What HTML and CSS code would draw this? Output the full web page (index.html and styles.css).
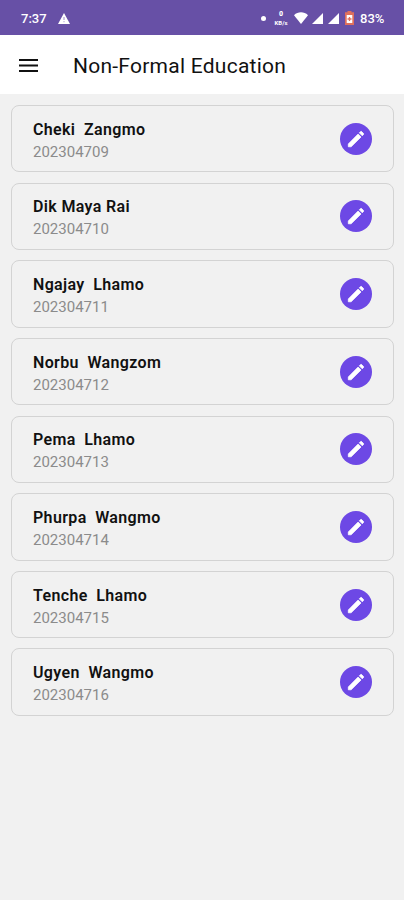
FILE: index.html
```
<!DOCTYPE html>
<html lang="en">
<head>
<meta charset="utf-8">
<title>Non-Formal Education</title>
<link rel="stylesheet" href="styles.css">
</head>
<body>
<svg class="defs" aria-hidden="true">
  <symbol id="pencil" viewBox="0 0 24 24"><path fill="#fff" stroke="#fff" stroke-width=".8" stroke-linejoin="round" d="M3.6 17.4V20.5H6.7L17.5 9.8l-3.2-3.2zM20.2 7.1a.8.8 0 0 0 0-1.1l-2.1-2.1a.8.8 0 0 0-1.1 0l-1.4 1.4 3.2 3.2z"/></symbol>
</svg>
<div class="status">
  <span class="time">7:37</span>
  <svg class="warn" viewBox="0 0 12 11"><path fill="#fff" d="M6 0l6 11H0z"/><path stroke="#9b87c9" d="M6 4v3M6 8.2v1"/></svg>
  <span class="dot"></span>
  <span class="net"><b>0</b><span>KB/s</span></span>
  <svg class="wifi" viewBox="0 0 14 12"><path fill="#fff" d="M0 3.2C4 -.6 10 -.6 14 3.2L7 12z"/></svg>
  <svg class="signal" viewBox="0 0 11 11"><path fill="#fff" d="M11 0v11H0z"/></svg>
  <svg class="signal" viewBox="0 0 11 11"><path fill="#fff" d="M11 0v11H0z"/></svg>
  <svg class="battery" viewBox="0 0 9 14"><path fill="#e0705c" d="M2.5 0h4v1.2H9V14H0V1.2h2.5z"/><path fill="#fff" d="M1.7 4h5.6v8H1.7z"/><path stroke="#e0705c" stroke-width="1.3" d="M4.5 6v4M2.5 8h4"/></svg>
  <span class="percent">83%</span>
</div>
<header>
  <svg class="menu" viewBox="0 0 20 14"><path stroke="#111" stroke-width="2" d="M0 1h19M0 6.5h19M0 12h19"/></svg>
  <h1>Non-Formal Education</h1>
</header>
<main>
  <div class="card"><div class="text"><div class="name">Cheki  Zangmo</div><div class="id">202304709</div></div><span class="edit"><svg><use href="#pencil"/></svg></span></div>
  <div class="card"><div class="text"><div class="name">Dik Maya Rai</div><div class="id">202304710</div></div><span class="edit"><svg><use href="#pencil"/></svg></span></div>
  <div class="card"><div class="text"><div class="name">Ngajay  Lhamo</div><div class="id">202304711</div></div><span class="edit"><svg><use href="#pencil"/></svg></span></div>
  <div class="card"><div class="text"><div class="name">Norbu  Wangzom</div><div class="id">202304712</div></div><span class="edit"><svg><use href="#pencil"/></svg></span></div>
  <div class="card"><div class="text"><div class="name">Pema  Lhamo</div><div class="id">202304713</div></div><span class="edit"><svg><use href="#pencil"/></svg></span></div>
  <div class="card"><div class="text"><div class="name">Phurpa  Wangmo</div><div class="id">202304714</div></div><span class="edit"><svg><use href="#pencil"/></svg></span></div>
  <div class="card"><div class="text"><div class="name">Tenche  Lhamo</div><div class="id">202304715</div></div><span class="edit"><svg><use href="#pencil"/></svg></span></div>
  <div class="card"><div class="text"><div class="name">Ugyen  Wangmo</div><div class="id">202304716</div></div><span class="edit"><svg><use href="#pencil"/></svg></span></div>
</main>
</body>
</html>
```
FILE: styles.css
```
* { box-sizing: border-box; }
body { margin: 0; height: 900px; overflow: hidden; background: #f1f1f1; font-family: Roboto, sans-serif; color: #111; }
svg { display: block; flex: none; }
.defs { display: none; }
.status { height: 35px; padding: 1px 20px 0 21px; background: #6750a6; display: flex; align-items: center; color: #fff; }
.time { font-size: 13px; font-weight: 500; width: 37px; }
.warn { width: 12px; height: 11px; }
.dot { width: 5px; height: 5px; border-radius: 50%; background: #fff; margin-left: auto; margin-right: 8px; }
.net { width: 14px; margin-right: 6px; display: flex; flex-direction: column; align-items: center; gap: 1px; font-size: 6px; line-height: 7px; font-weight: 700; }
.net b { font-size: 7px; line-height: 8px; }
.wifi { width: 14px; height: 12px; margin-right: 4px; }
.signal { width: 11px; height: 11px; margin-right: 5px; }
.battery { width: 9px; height: 14px; margin-left: 1px; margin-right: 6px; }
.percent { font-size: 13px; font-weight: 500; width: 24px; white-space: nowrap; }
header { height: 59px; background: #fff; padding: 2px 0 0 19px; display: flex; align-items: center; }
.menu { width: 20px; height: 14px; margin-right: 34px; }
h1 { margin: 0; font-size: 21px; line-height: 28px; font-weight: 400; letter-spacing: .25px; white-space: nowrap; }
main { padding: 11px 10px 0 11px; display: flex; flex-direction: column; gap: 10.25px; }
.card { height: 67.4px; border: 1px solid #d3d3d3; border-radius: 8px; padding: 0 21px; display: flex; align-items: center; justify-content: space-between; }
.text { padding-top: 4px; }
.name { font-size: 16px; line-height: 22px; font-weight: 600; letter-spacing: .35px; white-space: pre; }
.id { font-size: 15px; line-height: 22px; color: #8b8b8b; }
.edit { width: 32px; height: 32px; border-radius: 50%; background: #6d48e5; display: flex; align-items: center; justify-content: center; }
.edit svg { width: 22px; height: 22px; }
```
